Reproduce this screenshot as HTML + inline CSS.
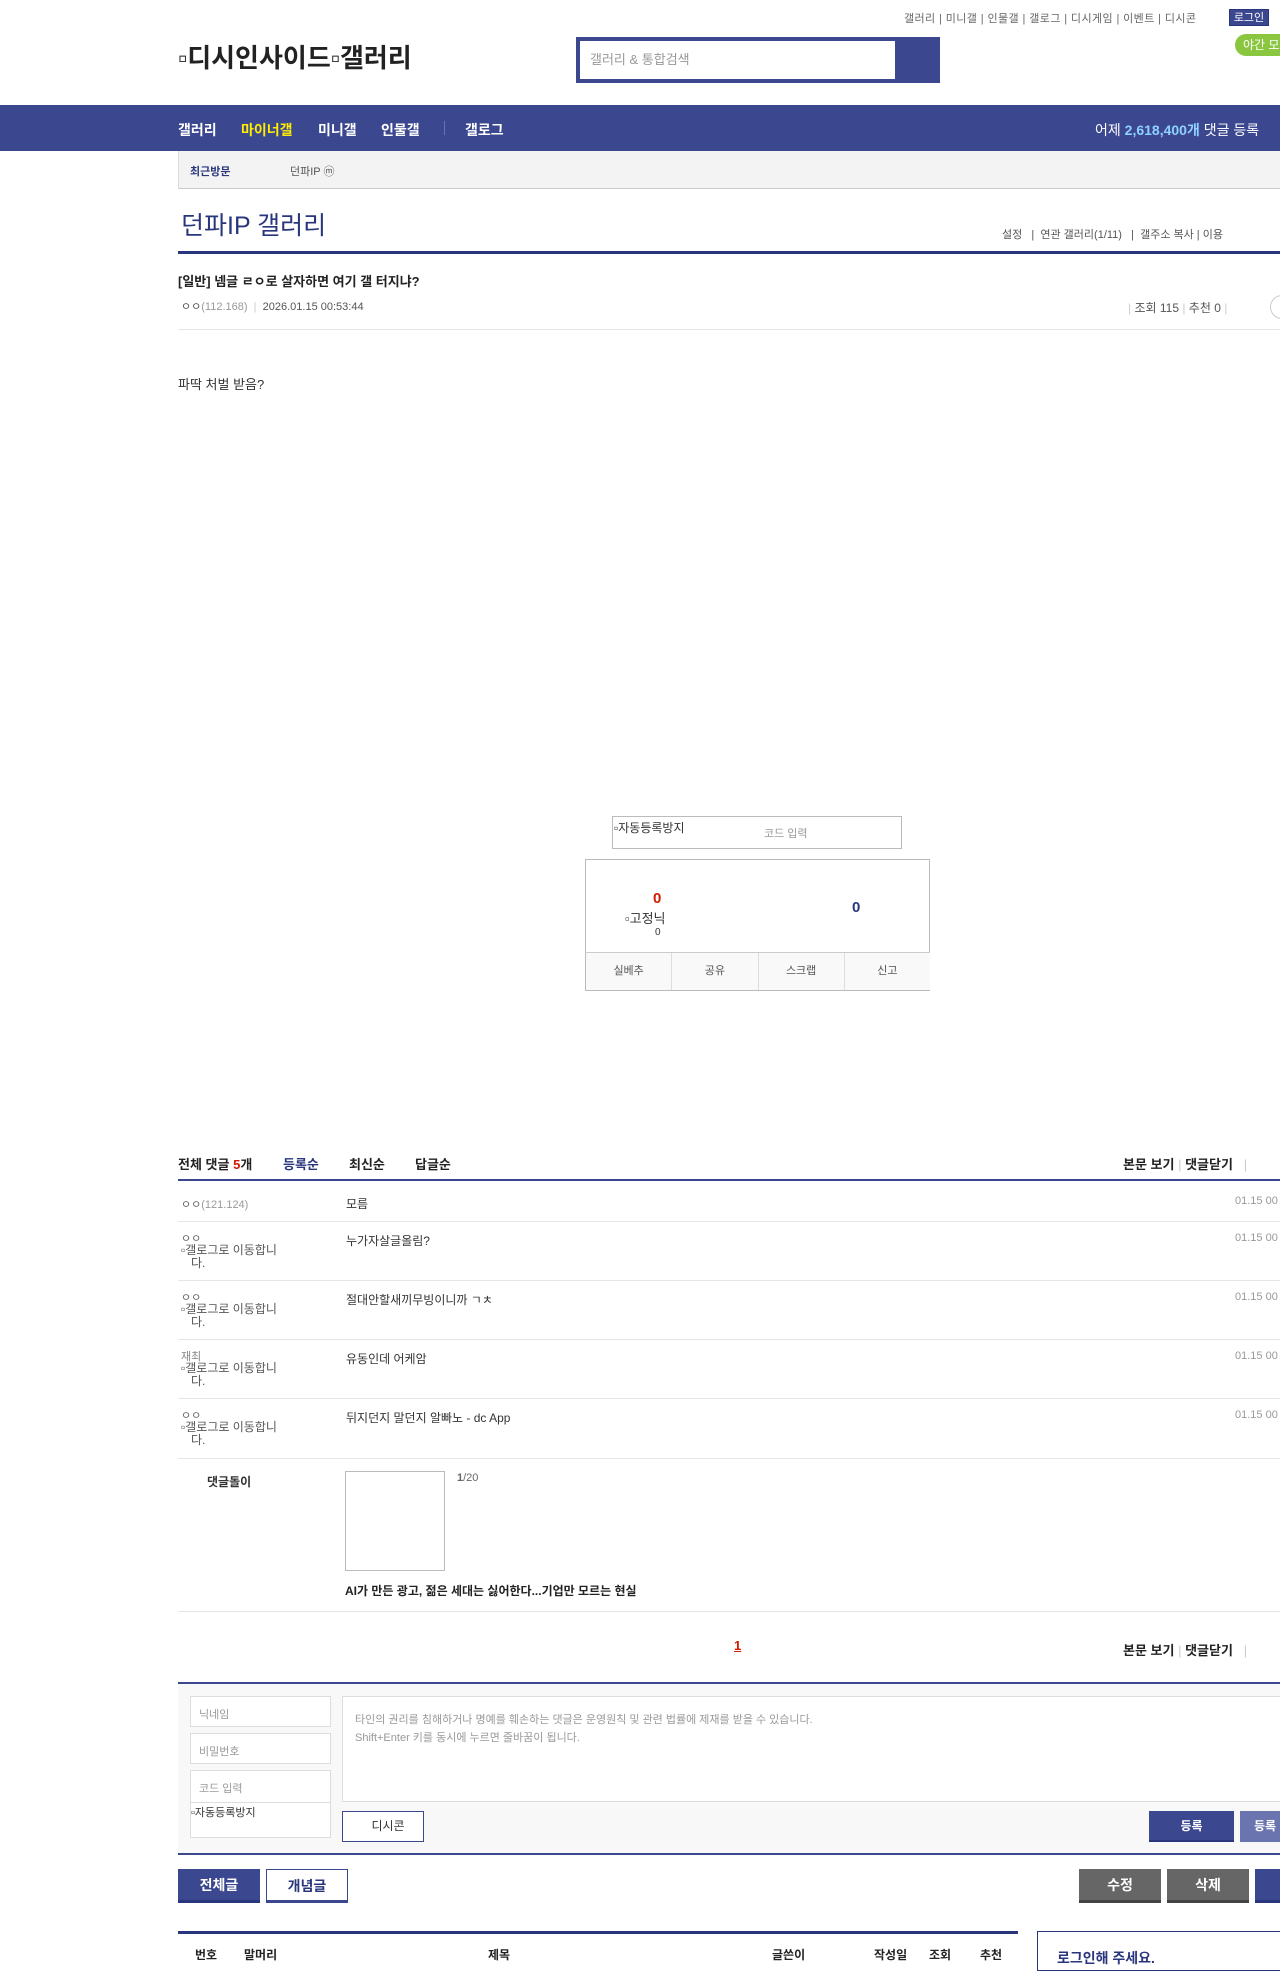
<!DOCTYPE html>
<html><head><meta charset="utf-8"><style>
*{margin:0;padding:0;box-sizing:border-box}
body{width:1280px;height:1960px;overflow:hidden;background:#fff;font-family:"Liberation Sans","Noto Sans CJK KR",sans-serif;font-size:12px;color:#333;position:relative}
.a{position:absolute;white-space:nowrap}
.b{font-weight:bold}
.nav{background:#3b4890;color:#fff}
.line{position:absolute;background:#29367c}
.sep{position:absolute;height:1px;background:#e6e6e6;left:178px;width:1102px}
.gray{color:#999}
.btn{position:absolute;text-align:center;font-weight:bold;font-size:14px;line-height:32px}
</style></head><body>
<div class="a gray" style="left:904px;top:10px;font-size:11px;color:#666;letter-spacing:0.4px">갤러리 | 미니갤 | 인물갤 | 갤로그 | 디시게임 | 이벤트 | 디시콘</div>
<div class="a" style="left:1229px;top:9px;width:40px;height:17px;background:#3b4890;color:#fff;font-size:11px;text-align:center;line-height:17px;border:1px solid #29367c">로그인</div>
<div class="a" style="left:1235px;top:34px;width:60px;height:22px;background:#8ac63f;border-radius:11px;color:#fff;font-size:12px;line-height:22px;padding-left:8px">야간 모드</div>
<div class="a" style="left:178px;top:38px;font-size:26px;color:#222;font-weight:bold">▫디시인사이드▫갤러리</div>
<div class="a" style="left:576px;top:37px;width:364px;height:46px;background:#3b4890"></div>
<div class="a" style="left:580px;top:41px;width:315px;height:38px;background:#fff;color:#999;font-size:13px;line-height:38px;padding-left:10px">갤러리 &amp; 통합검색</div>
<div class="a nav" style="left:0;top:105px;width:1280px;height:46px"></div>
<div class="a b" style="left:178px;top:120px;color:#fff;font-size:14px">갤러리</div>
<div class="a b" style="left:241px;top:120px;color:#ffed00;font-size:14px">마이너갤</div>
<div class="a b" style="left:318px;top:120px;color:#fff;font-size:14px">미니갤</div>
<div class="a b" style="left:381px;top:120px;color:#fff;font-size:14px">인물갤</div>
<div class="a" style="left:444px;top:121px;width:1px;height:14px;background:#6a75b0"></div>
<div class="a b" style="left:465px;top:120px;color:#fff;font-size:14px">갤로그</div>
<div class="a" style="left:1095px;top:120px;color:#fff;font-size:14px">어제 <b style="color:#8fd1ff">2,618,400개</b> 댓글 등록</div>
<div class="a" style="left:178px;top:151px;width:1102px;height:38px;background:#f3f3f3;border-bottom:1px solid #ccc;border-left:1px solid #ddd"></div>
<div class="a b" style="left:190px;top:163px;font-size:11px;color:#29367c">최근방문</div>
<div class="a" style="left:290px;top:163px;font-size:11px;color:#555">던파IP ⓜ</div>
<div class="a" style="left:181px;top:206px;font-size:25px;color:#29367c">던파IP 갤러리</div>
<div class="a" style="left:1002px;top:226px;font-size:11px;color:#555">설정 &nbsp; | &nbsp;연관 갤러리(1/11) &nbsp; | &nbsp;갤주소 복사 | 이용</div>
<div class="line" style="left:178px;top:251px;width:1102px;height:3px"></div>
<div class="a b" style="left:178px;top:271px;font-size:13px;color:#222">[일반] 넴글 ㄹㅇ로 살자하면 여기 갤 터지냐?</div>
<div class="a" style="left:181px;top:298px;font-size:11px;color:#555">ㅇㅇ<span class="gray">(112.168)</span> <span style="color:#ccc">&nbsp;|&nbsp;</span> 2026.01.15 00:53:44</div>
<div class="a" style="left:1128px;top:299px;font-size:12px;color:#555"><span style="color:#ccc">|</span> 조회 115 <span style="color:#ccc">|</span> 추천 0 <span style="color:#ccc">|</span></div>
<div class="a" style="left:1270px;top:295px;width:24px;height:24px;border:1px solid #ccc;border-radius:12px"></div>
<div class="sep" style="top:329px"></div>
<div class="a" style="left:178px;top:374px;font-size:13px">파딱 처벌 받음?</div>
<div class="a" style="left:612px;top:816px;width:290px;height:33px;border:1px solid #bbb"></div>
<div class="a" style="left:614px;top:819px;font-size:12px">▫자동등록방지</div>
<div class="a gray" style="left:764px;top:825px;font-size:11px">코드 입력</div>
<div class="a" style="left:585px;top:859px;width:345px;height:132px;border:1px solid #bbb"></div>
<div class="a" style="left:585px;top:952px;width:345px;height:1px;background:#ccc"></div>
<div class="a b" style="left:653px;top:890px;color:#d31900;font-size:15px">0</div>
<div class="a" style="left:625px;top:908px;font-size:13px">▫고정닉</div>
<div class="a" style="left:655px;top:927px;font-size:10px">0</div>
<div class="a b" style="left:852px;top:899px;color:#29367c;font-size:15px">0</div>
<div class="a" style="left:586px;top:953px;width:344px;height:37px;display:flex;font-size:11px;color:#555;background:#f9f9f9">
<div style="flex:1;text-align:center;line-height:37px;border-right:1px solid #ddd">실베추</div>
<div style="flex:1;text-align:center;line-height:37px;border-right:1px solid #ddd">공유</div>
<div style="flex:1;text-align:center;line-height:37px;border-right:1px solid #ddd">스크랩</div>
<div style="flex:1;text-align:center;line-height:37px">신고</div></div>
<div class="a b" style="left:178px;top:1154px;font-size:13px;color:#222">전체 댓글 <span style="color:#d31900">5</span>개</div>
<div class="a b" style="left:283px;top:1154px;font-size:13px;color:#29367c">등록순</div>
<div class="a b" style="left:349px;top:1154px;font-size:13px;color:#222">최신순</div>
<div class="a b" style="left:415px;top:1154px;font-size:13px;color:#222">답글순</div>
<div class="a b" style="left:1123px;top:1154px;font-size:13px;color:#222">본문 보기 <span style="color:#ccc;font-weight:normal">|</span> 댓글닫기 &nbsp; <span style="color:#ccc;font-weight:normal">|</span></div>
<div class="line" style="left:178px;top:1179px;width:1102px;height:2px;background:#3b4890"></div>
<div class="a" style="left:181px;top:1196px;font-size:11px;color:#666">ㅇㅇ<span class="gray">(121.124)</span></div>
<div class="a" style="left:346px;top:1195px;font-size:12px">모름</div>
<div class="a gray" style="left:1235px;top:1195px;font-size:11px">01.15 00</div>
<div class="sep" style="top:1221px"></div>
<div class="a" style="left:181px;top:1230px;font-size:11px;color:#666">ㅇㅇ</div>
<div class="a" style="left:181px;top:1244px;font-size:12px;color:#555;line-height:13px">▫갤로그로 이동합니<br>&nbsp;&nbsp;&nbsp;다.</div>
<div class="a" style="left:346px;top:1232px">누가자살글올림?</div>
<div class="a gray" style="left:1235px;top:1232px;font-size:11px">01.15 00</div>
<div class="sep" style="top:1280px"></div>
<div class="a" style="left:181px;top:1289px;font-size:11px;color:#666">ㅇㅇ</div>
<div class="a" style="left:181px;top:1303px;font-size:12px;color:#555;line-height:13px">▫갤로그로 이동합니<br>&nbsp;&nbsp;&nbsp;다.</div>
<div class="a" style="left:346px;top:1291px">절대안할새끼무빙이니까 ㄱㅊ</div>
<div class="a gray" style="left:1235px;top:1291px;font-size:11px">01.15 00</div>
<div class="sep" style="top:1339px"></div>
<div class="a" style="left:181px;top:1348px;font-size:11px;color:#888">재최</div>
<div class="a" style="left:181px;top:1362px;font-size:12px;color:#555;line-height:13px">▫갤로그로 이동합니<br>&nbsp;&nbsp;&nbsp;다.</div>
<div class="a" style="left:346px;top:1350px">유동인데 어케암</div>
<div class="a gray" style="left:1235px;top:1350px;font-size:11px">01.15 00</div>
<div class="sep" style="top:1398px"></div>
<div class="a" style="left:181px;top:1407px;font-size:11px;color:#666">ㅇㅇ</div>
<div class="a" style="left:181px;top:1421px;font-size:12px;color:#555;line-height:13px">▫갤로그로 이동합니<br>&nbsp;&nbsp;&nbsp;다.</div>
<div class="a" style="left:346px;top:1409px">뒤지던지 말던지 알빠노 - dc App</div>
<div class="a gray" style="left:1235px;top:1409px;font-size:11px">01.15 00</div>
<div class="sep" style="top:1458px"></div>
<div class="a b" style="left:207px;top:1473px;font-size:12px">댓글돌이</div>
<div class="a" style="left:345px;top:1471px;width:100px;height:100px;border:1px solid #bbb"></div>
<div class="a" style="left:457px;top:1472px;font-size:11px;color:#666"><b>1</b>/20</div>
<div class="a b" style="left:345px;top:1582px;font-size:12px;color:#222">AI가 만든 광고, 젊은 세대는 싫어한다...기업만 모르는 현실</div>
<div class="sep" style="top:1611px"></div>
<div class="a b" style="left:734px;top:1638px;font-size:13px;color:#d31900;text-decoration:underline">1</div>
<div class="a b" style="left:1123px;top:1640px;font-size:13px;color:#222">본문 보기 <span style="color:#ccc;font-weight:normal">|</span> 댓글닫기 &nbsp; <span style="color:#ccc;font-weight:normal">|</span></div>
<div class="line" style="left:178px;top:1672px;width:1102px;height:2px;background:#3b4890;top:1682px"></div>
<div class="a" style="left:178px;top:1684px;width:1102px;height:170px;background:#f8f8f8"></div>
<div class="line" style="left:178px;top:1853px;width:1102px;height:2px;background:#3b4890"></div>
<div class="a gray" style="left:190px;top:1696px;width:141px;height:31px;border:1px solid #ddd;background:#fff;padding:9px 8px;font-size:11px">닉네임</div>
<div class="a gray" style="left:190px;top:1733px;width:141px;height:31px;border:1px solid #ddd;background:#fff;padding:9px 8px;font-size:11px">비밀번호</div>
<div class="a gray" style="left:190px;top:1770px;width:141px;height:68px;border:1px solid #ddd;background:#fff;padding:9px 8px;font-size:11px">코드 입력</div>
<div class="a" style="left:190px;top:1802px;width:141px;height:1px;background:#ddd"></div>
<div class="a" style="left:191px;top:1804px;font-size:11px">▫자동등록방지</div>
<div class="a gray" style="left:342px;top:1696px;width:940px;height:106px;border:1px solid #ddd;background:#fff;padding:14px 12px;font-size:11px;line-height:18px">타인의 권리를 침해하거나 명예를 훼손하는 댓글은 운영원칙 및 관련 법률에 제재를 받을 수 있습니다.<br>Shift+Enter 키를 동시에 누르면 줄바꿈이 됩니다.</div>
<div class="a" style="left:342px;top:1811px;width:82px;height:31px;border:1px solid #3b4890;background:#fff;font-size:12px;text-align:center;line-height:29px;padding-left:10px;color:#333">디시콘</div>
<div class="btn" style="left:1149px;top:1811px;width:85px;height:31px;background:#3b4890;color:#fff;font-size:12px;line-height:31px;border-bottom:2px solid #29367c">등록</div>
<div class="btn" style="left:1240px;top:1811px;width:50px;height:31px;background:#6a75b0;color:#fff;font-size:12px;line-height:31px;text-align:left;padding-left:14px">등록</div>
<div class="btn" style="left:178px;top:1869px;width:82px;height:34px;background:#3b4890;color:#fff;border-bottom:3px solid #29367c">전체글</div>
<div class="btn" style="left:266px;top:1869px;width:82px;height:34px;background:#fff;color:#29367c;border:1px solid #3b4890;border-bottom:3px solid #3b4890">개념글</div>
<div class="btn" style="left:1079px;top:1869px;width:82px;height:34px;background:#666;color:#fff;border-bottom:3px solid #444">수정</div>
<div class="btn" style="left:1167px;top:1869px;width:82px;height:34px;background:#666;color:#fff;border-bottom:3px solid #444">삭제</div>
<div class="btn" style="left:1255px;top:1869px;width:40px;height:34px;background:#3b4890;color:#fff;border-bottom:3px solid #29367c"></div>
<div class="line" style="left:178px;top:1931px;width:840px;height:3px"></div>
<div class="a b" style="left:195px;top:1946px;font-size:12px;color:#222">번호</div>
<div class="a b" style="left:244px;top:1946px;font-size:12px;color:#222">말머리</div>
<div class="a b" style="left:488px;top:1946px;font-size:12px;color:#222">제목</div>
<div class="a b" style="left:772px;top:1946px;font-size:12px;color:#222">글쓴이</div>
<div class="a b" style="left:874px;top:1946px;font-size:12px;color:#222">작성일</div>
<div class="a b" style="left:929px;top:1946px;font-size:12px;color:#222">조회</div>
<div class="a b" style="left:980px;top:1946px;font-size:12px;color:#222">추천</div>
<div class="a" style="left:1037px;top:1931px;width:260px;height:40px;border:1px solid #29367c"></div>
<div class="a b" style="left:1057px;top:1948px;font-size:14px;color:#29367c">로그인해 주세요.</div>
</body></html>
